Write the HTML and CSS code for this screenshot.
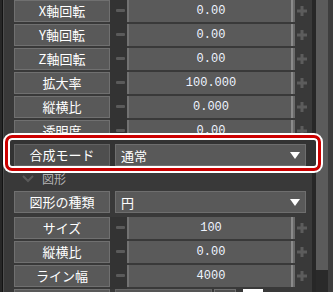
FILE: index.html
```html
<!DOCTYPE html>
<html lang="ja">
<head>
  <meta charset="UTF-8">
  <meta name="viewport" content="width=device-width, initial-scale=1.0">
  <title>プロパティ</title>
  <link rel="stylesheet" href="styles.css">
</head>
<body>
  <div class="panel">
    <div class="edge"></div>

    <div class="props">
      <div class="row">
        <div class="label">X軸回転</div>
        <div class="minus"><span></span></div>
        <div class="value">0.00</div>
        <div class="plus"><svg width="10" height="10"><path d="M5 0v10M0 5h10" stroke="#5c5c5c" stroke-width="3"/></svg></div>
      </div>
      <div class="row">
        <div class="label">Y軸回転</div>
        <div class="minus"><span></span></div>
        <div class="value">0.00</div>
        <div class="plus"><svg width="10" height="10"><path d="M5 0v10M0 5h10" stroke="#5c5c5c" stroke-width="3"/></svg></div>
      </div>
      <div class="row">
        <div class="label">Z軸回転</div>
        <div class="minus"><span></span></div>
        <div class="value">0.00</div>
        <div class="plus"><svg width="10" height="10"><path d="M5 0v10M0 5h10" stroke="#5c5c5c" stroke-width="3"/></svg></div>
      </div>
      <div class="row">
        <div class="label">拡大率</div>
        <div class="minus"><span></span></div>
        <div class="value">100.000</div>
        <div class="plus"><svg width="10" height="10"><path d="M5 0v10M0 5h10" stroke="#5c5c5c" stroke-width="3"/></svg></div>
      </div>
      <div class="row">
        <div class="label">縦横比</div>
        <div class="minus"><span></span></div>
        <div class="value">0.000</div>
        <div class="plus"><svg width="10" height="10"><path d="M5 0v10M0 5h10" stroke="#5c5c5c" stroke-width="3"/></svg></div>
      </div>
      <div class="row">
        <div class="label">透明度</div>
        <div class="minus"><span></span></div>
        <div class="value">0.00</div>
        <div class="plus"><svg width="10" height="10"><path d="M5 0v10M0 5h10" stroke="#5c5c5c" stroke-width="3"/></svg></div>
      </div>

      <!-- highlighted row -->
      <div class="row select-row marked">
        <div class="label">合成モード</div>
        <div class="select">通常<i class="caret"></i></div>
      </div>

      <div class="section">
        <svg width="12" height="8"><path d="M1 1l5 5 5-5" fill="none" stroke="#5a5a5a" stroke-width="2"/></svg>
        <span>図形</span>
      </div>

      <div class="row select-row">
        <div class="label">図形の種類</div>
        <div class="select">円<i class="caret"></i></div>
      </div>
      <div class="row">
        <div class="label">サイズ</div>
        <div class="minus"><span></span></div>
        <div class="value">100</div>
        <div class="plus"><svg width="10" height="10"><path d="M5 0v10M0 5h10" stroke="#5c5c5c" stroke-width="3"/></svg></div>
      </div>
      <div class="row">
        <div class="label">縦横比</div>
        <div class="minus"><span></span></div>
        <div class="value">0.00</div>
        <div class="plus"><svg width="10" height="10"><path d="M5 0v10M0 5h10" stroke="#5c5c5c" stroke-width="3"/></svg></div>
      </div>
      <div class="row">
        <div class="label">ライン幅</div>
        <div class="minus"><span></span></div>
        <div class="value">4000</div>
        <div class="plus"><svg width="10" height="10"><path d="M5 0v10M0 5h10" stroke="#5c5c5c" stroke-width="3"/></svg></div>
      </div>
      <div class="row color-row">
        <div class="label"></div>
        <div class="color-field"></div>
        <div class="color-btn"></div>
        <div class="swatch"></div>
      </div>
    </div>

    <div class="gutter"></div>
    <div class="scrollbar"><div class="thumb"></div></div>
    <div class="rim"></div>
  </div>
</body>
</html>
```

FILE: styles.css
```css
body {
  margin: 0;
  background: #393939;
  overflow: hidden;
}

.panel {
  display: flex;
  height: 292px;
  overflow: hidden;
}

.edge {
  width: 4px;
  background: linear-gradient(to right, #262626 0, #262626 2px, #131313 2px, #131313 3px, #4e4e4e 3px);
}

.props {
  width: 308px;
  background: #393939;
}

.row {
  display: flex;
  height: 24px;
  padding-left: 10px;
}

.label {
  box-sizing: border-box;
  width: 96px;
  height: 22px;
  background: #595959;
  border: 1px solid #707070;
  color: #fff;
  font-family: "Noto Sans CJK JP", sans-serif;
  font-size: 13px;
  line-height: 20px;
  text-align: center;
}

.minus {
  width: 17px;
  background: #333;
}

.minus span {
  display: block;
  width: 9px;
  height: 3px;
  margin: 9px 0 0 6px;
  border-radius: 1px;
  background: #5a5a5a;
}

.value {
  box-sizing: border-box;
  width: 168px;
  height: 22px;
  background: #5a5a5a;
  border-left: 2px solid #727272;
  border-right: 2px solid #6a6a6a;
  box-shadow: inset -2px 0 #8a8a8a;
  color: #eef4ff;
  font-family: "Liberation Mono", monospace;
  font-size: 12px;
  line-height: 22px;
  text-align: center;
}

.plus {
  width: 17px;
  padding: 6px 0 0 2px;
  box-sizing: border-box;
}

.plus svg {
  display: block;
}

.select-row {
  height: 22px;
}

.select {
  box-sizing: border-box;
  display: flex;
  align-items: center;
  width: 191px;
  height: 22px;
  margin-left: 5px;
  padding-left: 5px;
  background: #595959;
  border: 1px solid #6e6e6e;
  color: #fff;
  font-family: "Noto Sans CJK JP", sans-serif;
  font-size: 13px;
}

.caret {
  margin-left: auto;
  margin-right: 5px;
  border-left: 5px solid transparent;
  border-right: 5px solid transparent;
  border-top: 7px solid #fff;
}

.marked {
  position: relative;
  z-index: 1;
}

.marked .label {
  background: #4e4e4e;
  border-color: #626262;
}

.marked::before {
  content: "";
  position: absolute;
  top: -9px;
  bottom: -5px;
  left: 1px;
  right: -9px;
  z-index: -1;
  background: #333;
  border: 3px solid #cc0000;
  border-radius: 7px;
  box-shadow: 0 0 0 2px #fff, inset 0 0 0 2px #fff;
}

.section {
  display: flex;
  align-items: center;
  height: 25px;
  padding-left: 18px;
  color: #b4b4b4;
  font-family: "Noto Sans CJK JP", sans-serif;
  font-size: 12px;
}

.section svg {
  margin-right: 8px;
}

.section + .select-row {
  height: 26px;
}

.color-field {
  width: 97px;
  height: 22px;
  margin-left: 5px;
  background: #555;
  border: 1px solid #666;
  box-sizing: border-box;
}

.color-btn {
  width: 22px;
  height: 22px;
  margin-left: 2px;
  background: #4f4f4f;
  border: 1px solid #707070;
  box-sizing: border-box;
}

.swatch {
  width: 20px;
  height: 22px;
  margin-left: 7px;
  background: #fff;
}

.gutter {
  width: 4px;
  background: #272727;
}

.scrollbar {
  width: 12px;
  background: #2a2a2a;
}

.thumb {
  height: 270px;
  background: #5b5b5b;
}

.rim {
  flex: 1;
  background: #3e3e3e;
}
```
